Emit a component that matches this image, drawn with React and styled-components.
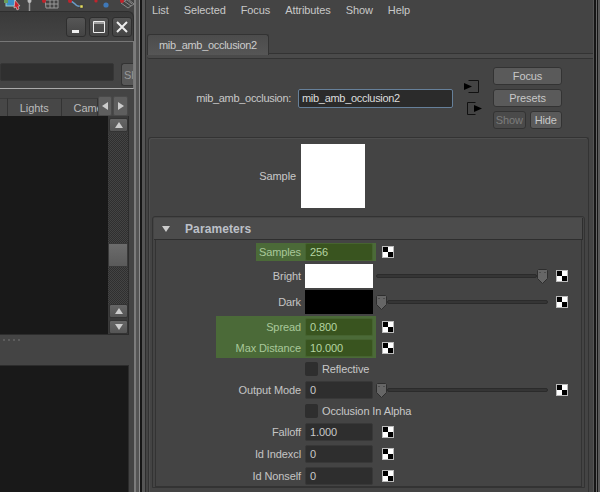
import React from 'react';
import styled, { createGlobalStyle } from 'styled-components';

const GlobalStyle = createGlobalStyle`
  html, body { margin: 0; padding: 0; background: #444; }
  * { box-sizing: border-box; }
`;

const Screen = styled.div`
  display: flex;
  width: 600px;
  height: 492px;
  overflow: hidden;
  background: #444;
  color: #c8c8c8;
  font-family: "Liberation Sans", Arial, sans-serif;
  font-size: 11px;
  letter-spacing: -0.1px;
`;

/* left column */
const LeftColumn = styled.div`
  display: flex;
  flex-direction: column;
  width: 134px;
  flex: none;
`;

const IconStrip = styled.svg`
  display: block;
  flex: none;
`;

const TitleBar = styled.div`
  display: flex;
  justify-content: flex-end;
  gap: 3px;
  height: 30px;
  padding: 5px 1px 0 0;
  background: linear-gradient(#3a3a3a, #444);
  border-top: 1px solid #2e2e2e;
  border-right: 1px solid #2e2e2e;
  border-top-right-radius: 6px;
`;

const WinButton = styled.div`
  display: flex;
  align-items: center;
  justify-content: center;
  width: 20px;
  height: 20px;
  border: 1px solid #2e2e2e;
  border-radius: 3px;
  background: linear-gradient(#565656, #444);
`;

const SearchPanel = styled.div`
  display: flex;
  height: 48px;
  padding-top: 21px;
  gap: 7px;
  background: #444;
  border-top: 1px solid #777;
  border-right: 1px solid #777;
  border-bottom: 1px solid #aaa;
`;

const SearchField = styled.div`
  width: 115px;
  height: 18px;
  background: #2f2f2f;
  border: 1px solid #363636;
  border-radius: 2px;
`;

const ClippedButton = styled.div`
  width: 12px;
  height: 23px;
  padding: 5px 0 0 2px;
  overflow: hidden;
  border: 1px solid #333;
  border-right: none;
  border-radius: 3px 0 0 3px;
  background: #585858;
  color: #999;
`;

const TabBar = styled.div`
  display: flex;
  align-items: flex-end;
  height: 27px;
  padding-right: 5px;
`;

const ViewTab = styled.div`
  display: flex;
  align-items: center;
  justify-content: ${p => (p.$clip ? 'flex-start' : 'center')};
  width: ${p => p.$w}px;
  height: 18px;
  padding-left: ${p => (p.$clip ? 12 : 0)}px;
  white-space: nowrap;
  background: #474747;
  border-top: 1px solid #3a3a3a;
  border-right: 1px solid #333;
  color: #bbb;
`;

const ArrowButton = styled.div`
  display: flex;
  align-items: center;
  justify-content: center;
  width: 15px;
  height: 20px;
  margin-right: 1px;
  border-radius: 2px;
  background: #5e5e5e;
  border: 1px solid #4a4a4a;
`;

const ViewPane = styled.div`
  display: flex;
  height: 219px;
  margin-right: 5px;
  border-right: 1px solid #2c2c2c;
  border-bottom: 1px solid #2c2c2c;
`;

const BlackArea = styled.div`
  flex: 1;
  background: #191919;
`;

const ScrollColumn = styled.div`
  display: flex;
  flex-direction: column;
  width: 20px;
  padding-top: 2px;
  background: #3a3a3a;
`;

const ScrollButton = styled.div`
  display: flex;
  align-items: center;
  justify-content: center;
  flex: none;
  height: 14px;
  margin: 0 0 2px 1px;
  border: 1px solid #333;
  border-radius: 2px;
  background: linear-gradient(#666, #555);
`;

const ScrollTrack = styled.div`
  height: ${p => p.$h}px;
  flex: none;
  background-color: #3a3a3a;
  background-image: repeating-conic-gradient(#2f2f2f 0 25%, #444 0 50%);
  background-size: 2px 2px;
`;

const ScrollThumb = styled.div`
  height: 24px;
  flex: none;
  border: 1px solid #3a3a3a;
  background: linear-gradient(#6c6c6c, #5a5a5a);
`;

const Gutter = styled.div`
  display: flex;
  gap: 3px;
  height: 30px;
  padding: 4px 0 0 3px;
`;

const GripDot = styled.span`
  width: 2px;
  height: 2px;
  background: #5c5c5c;
`;

const LowerPane = styled.div`
  flex: 1;
  margin-right: 5px;
  background: #191919;
  border-top: 1px solid #2c2c2c;
  border-right: 1px solid #2c2c2c;
`;

const Divider = styled.div`
  flex: none;
  width: 13px;
  background: linear-gradient(
    to right,
    #7c7c7c 0 2px,
    #555 2px 5px,
    #8a8a8a 5px 6px,
    #161616 6px 8px,
    #555 8px 11px,
    #2e2e2e 11px 12px,
    #444 12px 13px
  );
`;

/* attribute editor */
const Editor = styled.div`
  flex: 1;
  display: flex;
  flex-direction: column;
  min-width: 0;
`;

const MenuBar = styled.div`
  display: flex;
  flex: none;
  gap: 15px;
  height: 34px;
  padding: 3px 0 0 5px;
  line-height: 14px;
`;

const TabStrip = styled.div`
  flex: none;
  height: 25px;
  border-bottom: 1px solid #333;
  background: linear-gradient(to bottom, transparent 19px, #333 19px, #333 20px, #4a4a4a 20px);
  border-radius: 0 0 0 3px;
`;

const NodeTab = styled.div`
  display: flex;
  align-items: center;
  width: 122px;
  height: 21px;
  padding-left: 11px;
  background: linear-gradient(#4c4c4c, #565656);
  border: 1px solid #333;
  border-bottom: none;
  border-radius: 3px 3px 0 0;
  color: #ccc;
  letter-spacing: -0.3px;
`;

const NameArea = styled.div`
  display: flex;
  flex: none;
  height: 78px;
`;

const NameLabel = styled.div`
  width: 144px;
  margin-top: 32px;
  line-height: 14px;
  text-align: right;
  letter-spacing: -0.3px;
`;

const NameInput = styled.div`
  width: 155px;
  height: 19px;
  margin: 30px 0 0 7px;
  padding-left: 3px;
  line-height: 17px;
  background: #2b2b2b;
  border: 1px solid #66809a;
  border-radius: 2px;
  color: #ddd;
  letter-spacing: -0.3px;
`;

const Connectors = styled.div`
  display: flex;
  flex-direction: column;
  gap: 8px;
  width: 18px;
  margin: 21px 0 0 11px;
`;

const ButtonColumn = styled.div`
  display: flex;
  flex-direction: column;
  align-self: flex-start;
  gap: 4px;
  width: 69px;
  margin: 8px 0 0 11px;
`;

const ButtonRow = styled.div`
  display: flex;
  gap: 4px;
`;

const ToolButton = styled.div`
  flex: ${p => (p.$half ? 1 : 'none')};
  height: 18px;
  line-height: 16px;
  text-align: center;
  background: ${p => (p.$off ? '#4a4a4a' : '#5a5a5a')};
  border: 1px solid #333;
  border-radius: 3px;
  color: ${p => (p.$off ? '#7c7c7c' : '#c8c8c8')};
`;

const OuterBox = styled.div`
  flex: 1;
  margin: 0 4px 0 1px;
  padding: 6px 3px 0 3px;
  border: 1px solid #333;
  border-bottom: none;
  border-radius: 3px 3px 0 0;
  box-shadow: inset 1px 1px 0 #4e4e4e;
`;

const SampleRow = styled.div`
  display: flex;
  align-items: center;
  height: 64px;
  gap: 5px;
`;

const SampleLabel = styled.div`
  width: 144px;
  text-align: right;
`;

const SampleSwatch = styled.div`
  width: 64px;
  height: 64px;
  background: #fff;
`;

const ParamFrame = styled.div`
  height: 272px;
  margin-top: 8px;
  border: 1px solid #333;
  border-radius: 3px 3px 0 0;
  padding: 1px;
`;

const ParamHeader = styled.div`
  display: flex;
  align-items: center;
  gap: 14px;
  height: 22px;
  padding-left: 7px;
  background: #4c4c4c;
  border-bottom: 1px solid #2e2e2e;
  border-right: 1px solid #2e2e2e;
  font-size: 12px;
  font-weight: bold;
  letter-spacing: 0.1px;
  color: #bcc0c8;
`;

const ParamBody = styled.div`
  margin: 0 1px;
  padding-top: 2px;
  height: 247px;
  border: 1px solid #333;
  border-top: none;
`;

const Row = styled.div`
  display: flex;
  align-items: center;
  height: ${p => p.$h}px;
  margin-top: ${p => p.$mt || 0}px;
`;

const LabelCell = styled.div`
  display: flex;
  justify-content: flex-end;
  align-self: stretch;
  width: 149px;
  flex: none;
`;

const Label = styled.div`
  display: flex;
  align-items: center;
  justify-content: flex-end;
  width: ${p => (p.$w ? `${p.$w}px` : 'auto')};
  margin: ${p => p.$inset || 0}px 0;
  padding-right: 4px;
  background: ${p => (p.$green ? '#4b6a38' : 'transparent')};
  color: ${p => (p.$green ? '#a9c89a' : '#c4c4c4')};
`;

const FieldWrap = styled.div`
  display: flex;
  align-items: center;
  align-self: stretch;
  width: 71px;
  flex: none;
  margin: ${p => p.$inset || 0}px 0;
  background: ${p => (p.$green ? '#4b6a38' : 'transparent')};
`;

const Field = styled.div`
  width: 68px;
  height: 18px;
  padding-left: 4px;
  line-height: 16px;
  background: ${p => (p.$green ? '#39541f' : '#2e2e2e')};
  border: 1px solid ${p => (p.$green ? '#466330' : '#383838')};
  border-radius: 2px;
  color: ${p => (p.$green ? '#b5d4a2' : '#c8c8c8')};
`;

const ColorSwatch = styled.div`
  width: 68px;
  height: 24px;
  background: ${p => p.$color};
`;

const MapButton = styled.svg`
  display: block;
  flex: none;
  margin-left: ${p => p.$ml || 6}px;
`;

const Slider = styled.div`
  display: flex;
  align-items: center;
  width: 172px;
  flex: none;
`;

const SliderTrack = styled.div`
  flex: 1;
  height: 4px;
  background: #353535;
  border: 1px solid #2b2b2b;
  border-radius: 2px;
`;

const CheckSpacer = styled.div`
  width: 149px;
  flex: none;
`;

const CheckBox = styled.div`
  width: 13px;
  height: 14px;
  flex: none;
  background: #2e2e2e;
  border-radius: 2px;
`;

const CheckLabel = styled.div`
  margin-left: 4px;
  white-space: nowrap;
`;

const EdgeStrip = styled.div`
  flex: none;
  width: 7px;
  background: linear-gradient(
    to right,
    #555 0 1px,
    #161616 1px 3px,
    #666 3px 4px,
    #161616 4px 5px,
    #5a5a5a 5px 7px
  );
`;

const ToolbarIcons = () => (
  <IconStrip width="134" height="11" viewBox="0 0 134 11">
    <rect x="6" y="-2" width="9" height="8" fill="#3d8fc8" stroke="#9cc" />
    <rect x="4" y="-2" width="4" height="5" fill="#6a9c5a" />
    <path d="M15 0l5 6-2 0 1 3-2 1-1-3-2 1z" fill="#c8222c" stroke="#eee" strokeWidth=".5" />
    <path d="M29.5 0v11" stroke="#999" strokeWidth="1.5" />
    <circle cx="29.5" cy="1" r="2" fill="#bbb" />
    <path d="M45 0l13 0v8H46zM50 0v8M54 0v8M46 4h12" fill="none" stroke="#999" />
    <circle cx="44" cy="1" r="2" fill="#c0242c" />
    <path d="M69 1c4 0 5 2 7 4s4 1 5 1" fill="none" stroke="#6a9cc8" strokeWidth="1.5" />
    <circle cx="70" cy="1" r="2" fill="#c0242c" />
    <rect x="80" y="5" width="3" height="3" fill="#e8e060" stroke="#333" strokeWidth=".5" />
    <circle cx="96" cy="1" r="1.6" fill="#c0242c" />
    <circle cx="106" cy="5" r="2.6" fill="#3f78b8" />
    <path d="M121 3l7-4 6 5-6 4z M124 1l7 5M126 -1l6 5" fill="none" stroke="#8a8a8a" />
    <circle cx="122" cy="1" r="2" fill="#c0242c" />
  </IconStrip>
);

const Triangle = ({ dir, size = 8, fill = '#ccc' }) => {
  const points = {
    up: '0,6 4,0 8,6',
    down: '0,0 8,0 4,6',
    left: '6,0 6,8 0,4',
    right: '0,0 0,8 6,4',
  };
  const horizontal = dir === 'left' || dir === 'right';
  return (
    <svg width={horizontal ? 6 : size} height={horizontal ? size : 6} viewBox={horizontal ? '0 0 6 8' : '0 0 8 6'}>
      <polygon points={points[dir]} fill={fill} />
    </svg>
  );
};

const Checker = ({ ml }) => (
  <MapButton $ml={ml} width="12" height="12" viewBox="0 0 12 12">
    <rect width="12" height="12" fill="#fff" />
    <rect x="1" y="1" width="5" height="5" fill="#000" />
    <rect x="6" y="6" width="5" height="5" fill="#000" />
    <rect x=".5" y=".5" width="11" height="11" fill="none" stroke="#bbb" />
  </MapButton>
);

const Thumb = () => (
  <svg width="11" height="15" viewBox="0 0 11 15" style={{ flex: 'none' }}>
    <path d="M1.5.5h8l1 1v8l-5 5-5-5v-8z" fill="#666" stroke="#2e2e2e" />
    <path d="M3 3v1M8 3v1" stroke="#333" />
  </svg>
);

const InConnector = () => (
  <svg width="18" height="14" viewBox="0 0 18 14" style={{ display: 'block' }}>
    <path d="M4.5 .5h10v12h-10" fill="none" stroke="#111" />
    <polygon points="0,3 8,6.5 0,10" fill="#000" />
  </svg>
);

const OutConnector = () => (
  <svg width="18" height="14" viewBox="0 0 18 14" style={{ display: 'block' }}>
    <path d="M11.5 .5h-8v12h8" fill="none" stroke="#111" />
    <polygon points="10,3 18,6.5 10,10" fill="#000" />
  </svg>
);

const Attr = ({ label, value, h, mt, map = true, green, labelWidth, inset }) => (
  <Row $h={h} $mt={mt}>
    <LabelCell>
      <Label $green={green} $w={labelWidth} $inset={inset}>{label}</Label>
    </LabelCell>
    <FieldWrap $green={green} $inset={inset}>
      <Field $green={green}>{value}</Field>
    </FieldWrap>
    {map && <Checker />}
  </Row>
);

const ColorAttr = ({ label, color, value, h, mt }) => (
  <Row $h={h} $mt={mt}>
    <LabelCell>
      <Label>{label}</Label>
    </LabelCell>
    <FieldWrap>
      <ColorSwatch $color={color} />
    </FieldWrap>
    <Slider>
      {value > 0 && <SliderTrack />}
      <Thumb />
      {value === 0 && <SliderTrack />}
    </Slider>
    <Checker ml={8} />
  </Row>
);

const CheckAttr = ({ label, h }) => (
  <Row $h={h}>
    <CheckSpacer />
    <CheckBox />
    <CheckLabel>{label}</CheckLabel>
  </Row>
);

const App = () => {
  return (
    <Screen>
      <GlobalStyle />
      <LeftColumn>
        <ToolbarIcons />
        <TitleBar>
          <WinButton>
            <svg width="14" height="14" viewBox="0 0 14 14"><rect x="3" y="10" width="7" height="3" fill="#eee" /></svg>
          </WinButton>
          <WinButton>
            <svg width="14" height="14" viewBox="0 0 14 14"><path d="M1.5 1.5h11v11h-11z M1.5 3h11" fill="none" stroke="#eee" /></svg>
          </WinButton>
          <WinButton>
            <svg width="14" height="14" viewBox="0 0 14 14"><path d="M2 2l10 10M12 2L2 12" stroke="#eee" strokeWidth="2" /></svg>
          </WinButton>
        </TitleBar>
        <SearchPanel>
          <SearchField />
          <ClippedButton>Sh</ClippedButton>
        </SearchPanel>
        <TabBar>
          <ViewTab $w={8} />
          <ViewTab $w={55}>Lights</ViewTab>
          <ViewTab $w={36} $clip>Came</ViewTab>
          <ArrowButton><Triangle dir="left" /></ArrowButton>
          <ArrowButton><Triangle dir="right" /></ArrowButton>
        </TabBar>
        <ViewPane>
          <BlackArea />
          <ScrollColumn>
            <ScrollButton><Triangle dir="up" /></ScrollButton>
            <ScrollTrack $h={109} />
            <ScrollThumb />
            <ScrollTrack $h={37} />
            <ScrollButton><Triangle dir="up" /></ScrollButton>
            <ScrollButton><Triangle dir="down" /></ScrollButton>
          </ScrollColumn>
        </ViewPane>
        <Gutter>
          <GripDot /><GripDot /><GripDot /><GripDot />
        </Gutter>
        <LowerPane />
      </LeftColumn>
      <Divider />
      <Editor>
        <MenuBar>
          <span>List</span>
          <span>Selected</span>
          <span>Focus</span>
          <span>Attributes</span>
          <span>Show</span>
          <span>Help</span>
        </MenuBar>
        <TabStrip>
          <NodeTab>mib_amb_occlusion2</NodeTab>
        </TabStrip>
        <NameArea>
          <NameLabel>mib_amb_occlusion:</NameLabel>
          <NameInput>mib_amb_occlusion2</NameInput>
          <Connectors>
            <InConnector />
            <OutConnector />
          </Connectors>
          <ButtonColumn>
            <ToolButton>Focus</ToolButton>
            <ToolButton>Presets</ToolButton>
            <ButtonRow>
              <ToolButton $half $off>Show</ToolButton>
              <ToolButton $half>Hide</ToolButton>
            </ButtonRow>
          </ButtonColumn>
        </NameArea>
        <OuterBox>
          <SampleRow>
            <SampleLabel>Sample</SampleLabel>
            <SampleSwatch />
          </SampleRow>
          <ParamFrame>
            <ParamHeader>
              <Triangle dir="down" size={10} fill="#ccc" />
              Parameters
            </ParamHeader>
            <ParamBody>
              <Attr label="Samples" value="256" h={20} green labelWidth={49} inset={1} />
              <ColorAttr label="Bright" color="#fff" value={1} h={28} />
              <ColorAttr label="Dark" color="#000" value={0} h={24} />
              <Attr label="Spread" value="0.800" h={21} mt={2} green labelWidth={89} />
              <Attr label="Max Distance" value="10.000" h={21} green labelWidth={89} />
              <CheckAttr label="Reflective" h={22} />
              <Row $h={20}>
                <LabelCell><Label>Output Mode</Label></LabelCell>
                <FieldWrap><Field>0</Field></FieldWrap>
                <Slider>
                  <Thumb />
                  <SliderTrack />
                </Slider>
                <Checker ml={8} />
              </Row>
              <CheckAttr label="Occlusion In Alpha" h={21} />
              <Attr label="Falloff" value="1.000" h={22} />
              <Attr label="Id Indexcl" value="0" h={22} />
              <Attr label="Id Nonself" value="0" h={22} />
            </ParamBody>
          </ParamFrame>
        </OuterBox>
      </Editor>
      <EdgeStrip />
    </Screen>
  );
};

export default App;
